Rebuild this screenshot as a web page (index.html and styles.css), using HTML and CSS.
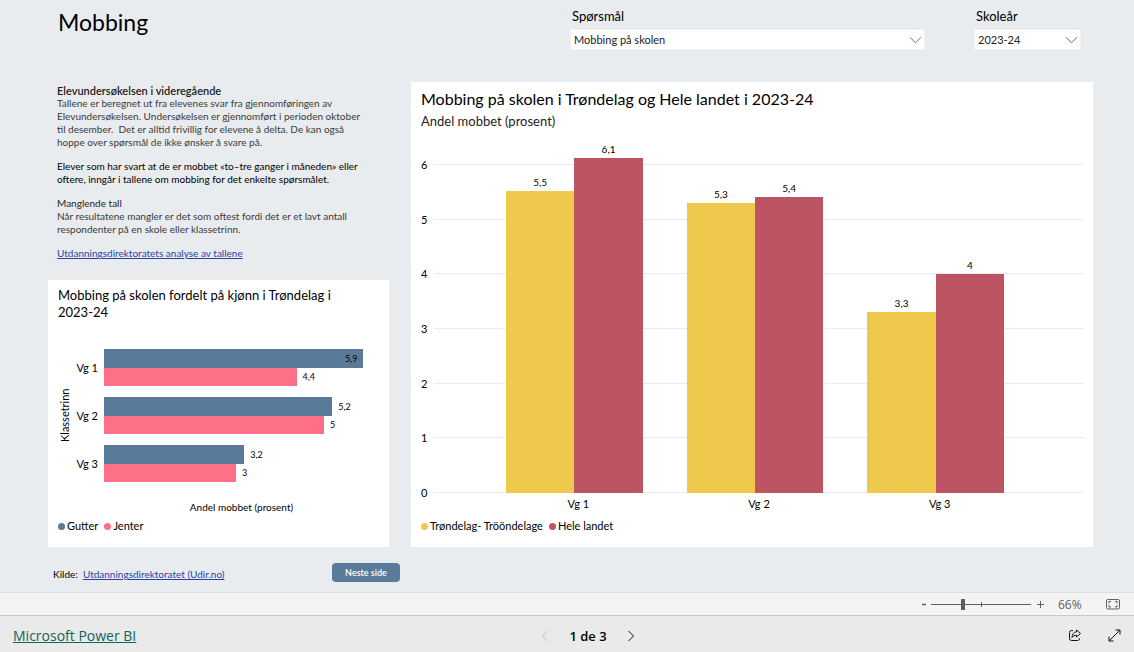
FILE: index.html
```html
<!DOCTYPE html>
<html lang="no">
<head>
<meta charset="utf-8">
<title>Mobbing</title>
<link rel="stylesheet" href="styles.css">
</head>
<body>
<main class="report">
  <header class="report-head">
    <h1 class="title">Mobbing</h1>
    <div class="filter filter-question">
      <label class="filter-label" for="question">Spørsmål</label>
      <div class="select-box">
        <select id="question" class="select"><option>Mobbing på skolen</option></select>
        <svg class="chevron warm" viewBox="0 0 14 8"><path d="M1 1l6 6 6-6"/></svg>
      </div>
    </div>
    <div class="filter filter-year">
      <label class="filter-label" for="year">Skoleår</label>
      <div class="select-box">
        <select id="year" class="select"><option>2023-24</option></select>
        <svg class="chevron" viewBox="0 0 14 8"><path d="M1 1l6 6 6-6"/></svg>
      </div>
    </div>
  </header>

  <div class="content">
    <div class="side">
      <section class="intro">
        <div>
          <h2 class="intro-title">Elevundersøkelsen i videregående</h2>
          <p>Tallene er beregnet ut fra elevenes svar fra gjennomføringen av<br>Elevundersøkelsen. Undersøkelsen er gjennomført i perioden oktober<br>til desember.&nbsp; Det er alltid frivillig for elevene å delta. De kan også<br>hoppe over spørsmål de ikke ønsker å svare på.</p>
        </div>
        <p class="strong">Elever som har svart at de er mobbet «to–tre ganger i måneden» eller<br>oftere, inngår i tallene om mobbing for det enkelte spørsmålet.</p>
        <div>
          <h3 class="intro-subtitle">Manglende tall</h3>
          <p>Når resultatene mangler er det som oftest fordi det er et lavt antall<br>respondenter på en skole eller klassetrinn.</p>
        </div>
        <p><a class="link" href="#">Utdanningsdirektoratets analyse av tallene</a></p>
      </section>

      <section class="card gender">
        <h2 class="gender-title">Mobbing på skolen fordelt på kjønn i Trøndelag i 2023-24</h2>
        <div class="hchart">
          <div class="y-title">Klassetrinn</div>
          <div class="hrows">
            <div class="hrow">
              <span class="hcat">Vg 1</span>
              <div class="hbars">
                <div class="hline"><div class="hbar blue inside" style="width:94%">5,9</div></div>
                <div class="hline"><div class="hbar pink" style="width:70%"></div><span>4,4</span></div>
              </div>
            </div>
            <div class="hrow">
              <span class="hcat">Vg 2</span>
              <div class="hbars">
                <div class="hline"><div class="hbar blue" style="width:83%"></div><span>5,2</span></div>
                <div class="hline"><div class="hbar pink" style="width:80%"></div><span>5</span></div>
              </div>
            </div>
            <div class="hrow">
              <span class="hcat">Vg 3</span>
              <div class="hbars">
                <div class="hline"><div class="hbar blue" style="width:51%"></div><span>3,2</span></div>
                <div class="hline"><div class="hbar pink" style="width:48%"></div><span>3</span></div>
              </div>
            </div>
          </div>
        </div>
        <div class="x-title">Andel mobbet (prosent)</div>
        <div class="legend">
          <span class="key"><i class="dot blue"></i>Gutter</span>
          <span class="key"><i class="dot pink"></i>Jenter</span>
        </div>
      </section>
    </div>

    <section class="card region">
      <h2 class="region-title">Mobbing på skolen i Trøndelag og Hele landet i 2023-24</h2>
      <p class="region-sub">Andel mobbet (prosent)</p>
      <div class="plot">
        <div class="ticks">
          <div class="tick"><span>6</span></div>
          <div class="tick"><span>5</span></div>
          <div class="tick"><span>4</span></div>
          <div class="tick"><span>3</span></div>
          <div class="tick"><span>2</span></div>
          <div class="tick"><span>1</span></div>
          <div class="tick"><span>0</span></div>
        </div>
        <div class="groups">
          <div class="group">
            <div class="col"><span>5,5</span><div class="bar yellow" style="height:91.7%"></div></div>
            <div class="col"><span>6,1</span><div class="bar red" style="height:101.7%"></div></div>
          </div>
          <div class="group">
            <div class="col"><span>5,3</span><div class="bar yellow" style="height:88.3%"></div></div>
            <div class="col"><span>5,4</span><div class="bar red" style="height:90%"></div></div>
          </div>
          <div class="group">
            <div class="col"><span>3,3</span><div class="bar yellow" style="height:55%"></div></div>
            <div class="col"><span>4</span><div class="bar red" style="height:66.7%"></div></div>
          </div>
        </div>
      </div>
      <div class="cats"><span>Vg 1</span><span>Vg 2</span><span>Vg 3</span></div>
      <div class="legend">
        <span class="key"><i class="dot yellow"></i>Trøndelag- Trööndelage</span>
        <span class="key"><i class="dot red"></i>Hele landet</span>
      </div>
    </section>
  </div>

  <div class="source">
    <p class="source-text">Kilde:&nbsp; <a class="link" href="#">Utdanningsdirektoratet (Udir.no)</a></p>
    <button class="next" type="button">Neste side</button>
  </div>
</main>

<div class="zoombar">
  <button class="zoom-btn" type="button" aria-label="Zoom ut"><svg width="6" height="10" viewBox="0 0 6 10"><path d="M1 5.5h4" stroke-width="1.5"/></svg></button>
  <input class="zoom-range" type="range" min="0" max="100" value="31" aria-label="Zoom">
  <button class="zoom-btn" type="button" aria-label="Zoom inn"><svg width="8" height="8" viewBox="0 0 8 8"><path d="M0 4.5h7M3.5 1v7"/></svg></button>
  <span class="zoom-value">66%</span>
  <button class="zoom-btn" type="button" aria-label="Tilpass til siden"><svg width="15" height="11" viewBox="0 0 15 11"><rect x=".5" y=".5" width="13" height="9.500" rx="1.500"/><path d="M5 2.500H3v2M9 2.500h2v2M5 8H3V6M9 8h2V6"/></svg></button>
</div>

<footer class="footer">
  <a class="brand" href="#">Microsoft Power BI</a>
  <nav class="pager">
    <button class="icon-btn" type="button" disabled aria-label="Forrige side"><svg width="8" height="12" viewBox="0 0 8 12"><path d="M6.500 1L1.500 6l5 5"/></svg></button>
    <span>1 de 3</span>
    <button class="icon-btn" type="button" aria-label="Neste side"><svg width="8" height="12" viewBox="0 0 8 12"><path d="M1.500 1l5 5-5 5"/></svg></button>
  </nav>
  <div class="actions">
    <button class="icon-btn" type="button" aria-label="Del"><svg width="14" height="13" viewBox="0 0 14 13"><path d="M5 1.500H3.500a2 2 0 0 0-2 2v6a2 2 0 0 0 2 2h6a2 2 0 0 0 2-2V9"/><path d="M8.500 1l4 3.500-4 3.500V6.200C6.500 6.200 5 7 4 8.500 4.200 5.500 5.500 3 8.500 2.800z"/></svg></button>
    <button class="icon-btn" type="button" aria-label="Fullskjerm"><svg width="13" height="13" viewBox="0 0 13 13"><path d="M1 12L12 1M7.500 1H12v4.500M1 7.500V12h4.500"/></svg></button>
  </div>
</footer>
</body>
</html>
```
FILE: styles.css
```css
* { box-sizing: border-box; }

body {
  margin: 0;
  min-height: 100vh;
  display: flex;
  flex-direction: column;
  font-family: Lato, "Open Sans", sans-serif;
  font-size: 11px;
  color: #000;
  background: #e8ecef;
}

h1, h2, h3, p { margin: 0; font-weight: 400; }
button { border: 0; padding: 0; background: none; font-family: inherit; display: flex; align-items: center; justify-content: center; }
svg { display: block; fill: none; stroke: currentColor; }

.report { flex: 1; display: flex; flex-direction: column; padding: 0 41px 0 48px; }

.report-head { display: flex; height: 82px; align-items: flex-start; }
.title { flex: 1; padding: 8px 0 0 10px; font-size: 23px; line-height: 28px; }
.filter { padding-top: 7px; }
.filter-question { width: 355px; margin-right: 49px; }
.filter-year { width: 107px; margin-right: 12px; }
.filter-label { display: block; padding-left: 2px; font-size: 13px; line-height: 18px; margin-bottom: 4px; }
.select-box { position: relative; }
.select {
  display: block;
  width: 100%;
  height: 21px;
  padding: 0 3px;
  border: 1px solid #f0f0f0;
  border-radius: 0;
  background: #fff;
  appearance: none;
  font-family: inherit;
  font-size: 11px;
  color: #212121;
}
.chevron { position: absolute; right: 3px; top: 7px; width: 13px; height: 8px; color: #66586e; pointer-events: none; }
.chevron.warm { color: #8a5a3c; }

.content { flex: 1; display: grid; grid-template-columns: 1fr 2fr; gap: 22px; }
.side { display: flex; flex-direction: column; }
.card { background: #fff; }

.intro { display: flex; flex-direction: column; gap: 11px; height: 198px; padding: 2px 0 0 9px; font-size: 10px; line-height: 13px; color: #3b3a39; white-space: nowrap; }
.intro-title { font-size: 11px; line-height: 13px; font-weight: 600; color: #222; }
.intro-subtitle { font-size: 10px; line-height: 13px; color: #252423; }
.strong { color: #000; }
.link { color: #2f3fa0; text-decoration: underline; }

.gender { flex: 1; display: flex; flex-direction: column; padding: 7px 10px 12px; }
.gender-title { font-size: 13px; line-height: 17px; padding-right: 30px; }
.hchart { flex: 1; display: flex; margin-top: 28px; }
.y-title { width: 14px; writing-mode: vertical-rl; transform: rotate(180deg); text-align: center; font-size: 11px; line-height: 14px; }
.hrows { flex: 1; display: flex; flex-direction: column; gap: 11px; }
.hrow { flex: 1; display: flex; align-items: center; }
.hcat { width: 32px; padding-right: 6px; text-align: right; }
.hbars { flex: 1; align-self: stretch; display: flex; flex-direction: column; }
.hline { flex: 1; display: flex; align-items: center; gap: 6px; font-size: 9px; }
.hbar { height: 100%; display: flex; align-items: center; justify-content: flex-end; padding-right: 5px; }
.x-title { margin-top: 17px; padding-left: 46px; text-align: center; font-size: 10px; line-height: 16px; }

.blue { background: #597b99; }
.pink { background: #fd7088; }
.yellow { background: #efc94c; }
.red { background: #bd5464; }

.legend { display: flex; gap: 6px; font-size: 11px; line-height: 18px; margin-top: 2px; }
.key { display: flex; align-items: center; gap: 2px; }
.dot { width: 7px; height: 7px; border-radius: 50%; }

.region { display: flex; flex-direction: column; padding: 7px 9px 12px 10px; }
.region-title { font-size: 16px; line-height: 20px; }
.region-sub { font-size: 13px; line-height: 18px; margin-top: 3px; color: #252423; }
.plot { flex: 1; display: grid; margin-top: 34px; }
.ticks, .groups { grid-area: 1 / 1; }
.ticks { display: flex; flex-direction: column; justify-content: space-between; }
.tick { display: flex; align-items: center; gap: 6px; height: 1px; line-height: 1px; }
.tick span { width: 7px; }
.tick::after { content: ""; flex: 1; height: 1px; background: #ebebeb; }
.groups { display: flex; margin-left: 13px; padding: 0 58px 0 50px; }
.group { flex: 1; display: flex; padding: 0 22px; }
.col { flex: 1; display: flex; flex-direction: column; justify-content: flex-end; align-items: center; font-size: 10px; line-height: 18px; }
.bar { width: 100%; flex-shrink: 0; }
.cats { display: flex; margin-left: 13px; padding: 2px 54px 0; line-height: 18px; }
.cats span { flex: 1; text-align: center; }
.region .legend { margin-top: 4px; }

.source { display: flex; align-items: flex-start; height: 45px; padding: 16px 0 0 5px; }
.source-text { width: 279px; font-size: 10px; line-height: 22px; }
.next { width: 68px; height: 19px; border-radius: 4px; background: #597b99; color: #fff; font-size: 9px; font-weight: 600; }

.zoombar { display: flex; align-items: center; height: 23px; padding-right: 13px; justify-content: flex-end; background: #f4f4f4; border-top: 1px solid #dcdee0; color: #605e5c; }
.zoom-range {
  width: 100px;
  height: 12px;
  margin: 0 6px 0 4px;
  appearance: none;
  background:
    linear-gradient(#605e5c, #605e5c) center / 1px 5px no-repeat,
    linear-gradient(#605e5c, #605e5c) center / 100% 1px no-repeat;
}
.zoom-range::-webkit-slider-thumb { appearance: none; width: 4px; height: 11px; background: #605e5c; }
.zoom-btn { color: #605e5c; }
.zoom-value { width: 61px; padding-left: 13px; font-family: "Open Sans", sans-serif; font-size: 12px; }

.footer { display: grid; grid-template-columns: 1fr auto 1fr; align-items: center; height: 37px; padding: 3px 13px 0; border-top: 1px solid #c8c8c8; background: #eaeaea; font-family: "Open Sans", sans-serif; font-size: 14px; }
.brand { color: #10655a; }
.pager { display: flex; align-items: center; gap: 20px; padding-left: 42px; font-weight: 600; font-size: 13px; }
.icon-btn { color: #111; }
.icon-btn:disabled { color: #bdbdbd; }
.actions { display: flex; gap: 26px; justify-content: flex-end; }
```
